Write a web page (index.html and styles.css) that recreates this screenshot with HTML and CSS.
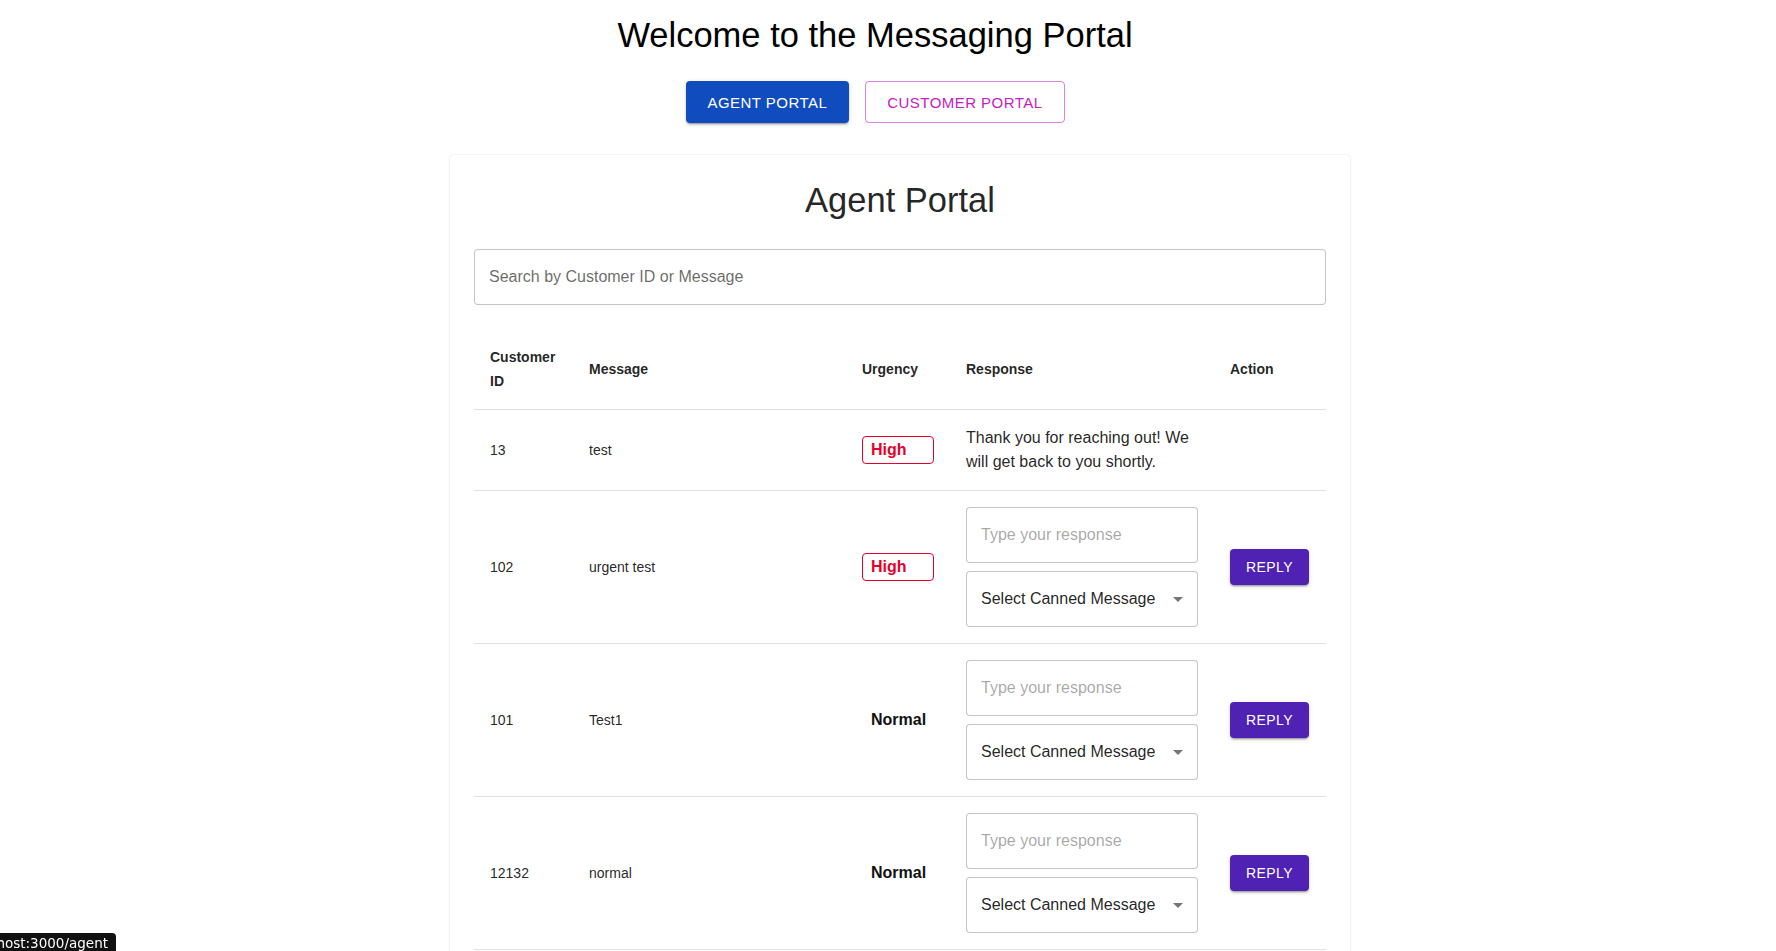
FILE: index.html
```html
<!DOCTYPE html>
<html lang="en">
<head>
<meta charset="utf-8">
<title>Messaging Portal</title>
<link rel="stylesheet" href="styles.css">
</head>
<body>
<header class="top">
  <h1 class="top-title">Welcome to the Messaging Portal</h1>
  <nav class="top-nav">
    <a class="btn btn-contained" href="#">Agent Portal</a>
    <a class="btn btn-outlined" href="#">Customer Portal</a>
  </nav>
</header>
<main class="page">
  <section class="card">
    <h2 class="card-title">Agent Portal</h2>
    <input class="search" type="text" placeholder="Search by Customer ID or Message">
    <table class="msg-table">
      <colgroup>
        <col class="col-id">
        <col class="col-msg">
        <col class="col-urg">
        <col class="col-resp">
        <col class="col-act">
      </colgroup>
      <thead>
        <tr>
          <th>Customer ID</th>
          <th>Message</th>
          <th>Urgency</th>
          <th>Response</th>
          <th>Action</th>
        </tr>
      </thead>
      <tbody>
        <tr>
          <td>13</td>
          <td>test</td>
          <td><span class="urgency urgency-high">High</span></td>
          <td><p class="response-text">Thank you for reaching out! We will get back to you shortly.</p></td>
          <td></td>
        </tr>
        <tr>
          <td>102</td>
          <td>urgent test</td>
          <td><span class="urgency urgency-high">High</span></td>
          <td>
            <div class="response">
              <input class="field" type="text" placeholder="Type your response">
              <div class="field select"><span>Select Canned Message</span><svg class="select-arrow" viewBox="0 0 24 24" width="24" height="24"><path d="M7 10l5 5 5-5z"/></svg></div>
            </div>
          </td>
          <td><a class="btn-reply" href="#">Reply</a></td>
        </tr>
        <tr>
          <td>101</td>
          <td>Test1</td>
          <td><span class="urgency urgency-normal">Normal</span></td>
          <td>
            <div class="response">
              <input class="field" type="text" placeholder="Type your response">
              <div class="field select"><span>Select Canned Message</span><svg class="select-arrow" viewBox="0 0 24 24" width="24" height="24"><path d="M7 10l5 5 5-5z"/></svg></div>
            </div>
          </td>
          <td><a class="btn-reply" href="#">Reply</a></td>
        </tr>
        <tr>
          <td>12132</td>
          <td>normal</td>
          <td><span class="urgency urgency-normal">Normal</span></td>
          <td>
            <div class="response">
              <input class="field" type="text" placeholder="Type your response">
              <div class="field select"><span>Select Canned Message</span><svg class="select-arrow" viewBox="0 0 24 24" width="24" height="24"><path d="M7 10l5 5 5-5z"/></svg></div>
            </div>
          </td>
          <td><a class="btn-reply" href="#">Reply</a></td>
        </tr>
      </tbody>
    </table>
  </section>
</main>
<div class="status"><span class="status-text">localhost:3000/agent</span></div>
</body>
</html>
```

FILE: styles.css
```css
* { box-sizing: border-box; }

html { overflow: hidden; }

body {
  margin: 0;
  background: #fff;
  color: rgba(0, 0, 0, 0.87);
  font-family: "Liberation Sans", Arial, sans-serif;
}

.top {
  padding: 14px 26px 0 0;
  text-align: center;
}

.top-title {
  margin: 0 0 25px;
  font-size: 34.5px;
  font-weight: 400;
  line-height: 42px;
  color: #000;
}

.top-nav {
  display: flex;
  justify-content: center;
  gap: 16px;
}

.btn {
  display: inline-flex;
  align-items: center;
  justify-content: center;
  height: 42px;
  padding: 0 22px;
  border-radius: 4px;
  font-family: "Liberation Sans", Arial, sans-serif;
  font-size: 15px;
  font-weight: 400;
  letter-spacing: 0.46px;
  text-transform: uppercase;
  text-decoration: none;
}

.btn-contained {
  background: #114cbf;
  color: #fff;
  box-shadow: 0 3px 1px -2px rgba(0, 0, 0, 0.2), 0 2px 2px 0 rgba(0, 0, 0, 0.14), 0 1px 5px 0 rgba(0, 0, 0, 0.12);
}

.btn-outlined {
  padding: 0 21px;
  border: 1px solid rgba(200, 20, 200, 0.55);
  color: #c41bc4;
}

.page {
  padding: 32px 0 0 24px;
}

.card {
  width: 900px;
  margin: 0 auto;
  padding: 24px;
  border-radius: 4px;
  background: #fff;
  box-shadow: 0 0 2px rgba(0, 0, 0, 0.14), 0 1px 3px rgba(0, 0, 0, 0.05);
}

.card-title {
  margin: 0 0 28px;
  text-align: center;
  font-size: 34.5px;
  font-weight: 400;
  line-height: 42px;
}

.search {
  display: block;
  width: 100%;
  height: 56px;
  margin: 0 0 24px;
  padding: 0 14px;
  border: 1px solid rgba(0, 0, 0, 0.23);
  border-radius: 4px;
  font-family: "Liberation Sans", Arial, sans-serif;
  font-size: 16px;
  color: rgba(0, 0, 0, 0.87);
}

.search::placeholder {
  color: rgba(0, 0, 0, 0.6);
}

.msg-table {
  width: 100%;
  border-collapse: collapse;
  table-layout: fixed;
  font-size: 14px;
}

.col-id { width: 99px; }
.col-msg { width: 273px; }
.col-urg { width: 104px; }
.col-resp { width: 264px; }
.col-act { width: 112px; }

.msg-table th,
.msg-table td {
  padding: 16px;
  border-bottom: 1px solid #e0e0e0;
  text-align: left;
  vertical-align: middle;
  line-height: 24px;
}

.msg-table th {
  font-weight: 700;
}

.response-text {
  margin: 0;
  font-size: 16px;
  line-height: 24px;
}

.urgency {
  display: block;
  padding: 1px 8px;
  border: 1px solid transparent;
  border-radius: 4px;
  font-size: 16px;
  font-weight: 700;
  line-height: 24px;
}

.urgency-high {
  border-color: #e5002b;
  color: #e5002b;
}

.urgency-normal {
  color: #111;
}

.response {
  display: flex;
  flex-direction: column;
  gap: 8px;
}

.field {
  display: flex;
  align-items: center;
  width: 100%;
  height: 56px;
  padding: 0 14px;
  border: 1px solid rgba(0, 0, 0, 0.23);
  border-radius: 4px;
  font-family: "Liberation Sans", Arial, sans-serif;
  font-size: 16px;
  color: rgba(0, 0, 0, 0.87);
  background: #fff;
}

.field::placeholder {
  color: rgba(0, 0, 0, 0.36);
}

.select {
  justify-content: space-between;
  padding-right: 7px;
}

.select-arrow {
  fill: rgba(0, 0, 0, 0.54);
  flex-shrink: 0;
}

.btn-reply {
  display: inline-flex;
  align-items: center;
  justify-content: center;
  height: 36px;
  padding: 0 16px;
  border-radius: 4px;
  background: #4f22b3;
  color: #fff;
  font-family: "Liberation Sans", Arial, sans-serif;
  font-size: 14px;
  font-weight: 400;
  letter-spacing: 0.4px;
  text-transform: uppercase;
  text-decoration: none;
  box-shadow: 0 3px 1px -2px rgba(0, 0, 0, 0.2), 0 2px 2px 0 rgba(0, 0, 0, 0.14), 0 1px 5px 0 rgba(0, 0, 0, 0.12);
}

.status {
  position: fixed;
  left: 0;
  bottom: 0;
  display: flex;
  justify-content: flex-end;
  width: 116px;
  height: 18px;
  padding-right: 8px;
  overflow: hidden;
  border-top-right-radius: 4px;
  background: #111;
  color: #fff;
  font-family: "DejaVu Sans", sans-serif;
  font-size: 13.5px;
  line-height: 20px;
  white-space: nowrap;
}

.status-text {
  flex-shrink: 0;
}
```
